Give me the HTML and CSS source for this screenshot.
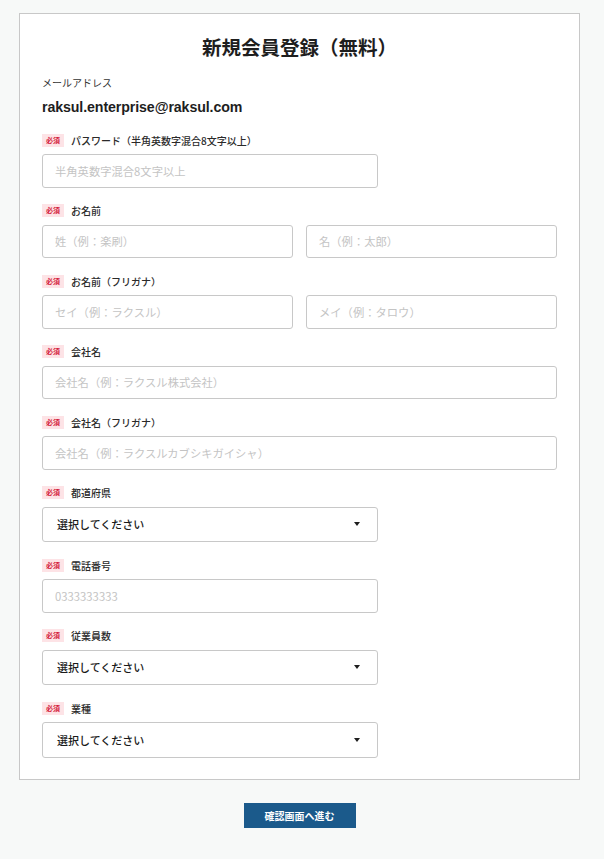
FILE: index.html
```html
<!DOCTYPE html>
<html lang="ja">
<head>
<meta charset="utf-8">
<title>新規会員登録（無料）</title>
<link rel="stylesheet" href="styles.css">
</head>
<body>
<main class="page">
  <form class="card">
    <h1 class="title">新規会員登録（無料）</h1>

    <div class="email-block">
      <div class="email-label">メールアドレス</div>
      <div class="email-value">raksul.enterprise@raksul.com</div>
    </div>

    <div class="field">
      <div class="label"><span class="badge">必須</span><span class="label-text">パスワード（半角英数字混合8文字以上）</span></div>
      <div class="control half"><span class="placeholder">半角英数字混合8文字以上</span></div>
    </div>

    <div class="field">
      <div class="label"><span class="badge">必須</span><span class="label-text">お名前</span></div>
      <div class="pair">
        <div class="control"><span class="placeholder">姓（例：楽刷）</span></div>
        <div class="control"><span class="placeholder">名（例：太郎）</span></div>
      </div>
    </div>

    <div class="field">
      <div class="label"><span class="badge">必須</span><span class="label-text">お名前（フリガナ）</span></div>
      <div class="pair">
        <div class="control"><span class="placeholder">セイ（例：ラクスル）</span></div>
        <div class="control"><span class="placeholder">メイ（例：タロウ）</span></div>
      </div>
    </div>

    <div class="field">
      <div class="label"><span class="badge">必須</span><span class="label-text">会社名</span></div>
      <div class="control"><span class="placeholder">会社名（例：ラクスル株式会社）</span></div>
    </div>

    <div class="field">
      <div class="label"><span class="badge">必須</span><span class="label-text">会社名（フリガナ）</span></div>
      <div class="control"><span class="placeholder">会社名（例：ラクスルカブシキガイシャ）</span></div>
    </div>

    <div class="field">
      <div class="label"><span class="badge">必須</span><span class="label-text">都道府県</span></div>
      <div class="control half select"><span class="select-text">選択してください</span><span class="caret"></span></div>
    </div>

    <div class="field">
      <div class="label"><span class="badge">必須</span><span class="label-text">電話番号</span></div>
      <div class="control half"><span class="placeholder">0333333333</span></div>
    </div>

    <div class="field">
      <div class="label"><span class="badge">必須</span><span class="label-text">従業員数</span></div>
      <div class="control half select"><span class="select-text">選択してください</span><span class="caret"></span></div>
    </div>

    <div class="field last">
      <div class="label"><span class="badge">必須</span><span class="label-text">業種</span></div>
      <div class="control half select"><span class="select-text">選択してください</span><span class="caret"></span></div>
    </div>
  </form>

  <div class="actions">
    <button type="button" class="submit">確認画面へ進む</button>
  </div>
</main>
</body>
</html>
```

FILE: styles.css
```css
* {
  box-sizing: border-box;
}

html,
body {
  margin: 0;
  padding: 0;
  background: #f7f9f8;
}

body {
  font-family: "Liberation Sans", "Noto Sans CJK JP", sans-serif;
  color: #222;
}

.page {
  padding: 13px 24px 0 19px;
}

.card {
  display: block;
  width: 561px;
  margin: 0;
  background: #fff;
  border: 1px solid #c8c8c8;
  padding: 21px 22px 21px;
}

.title {
  margin: 0;
  font-size: 19.5px;
  line-height: 24px;
  font-weight: 700;
  text-align: center;
  color: #1e1e1e;
  font-family: "Noto Sans CJK JP", sans-serif;
}

.email-block {
  margin-top: 17px;
  margin-bottom: 17px;
}

.email-label {
  font-family: "Noto Sans CJK JP", sans-serif;
  font-size: 10px;
  line-height: 14px;
  color: #333;
}

.email-value {
  margin-top: 8px;
  font-size: 14.2px;
  line-height: 18px;
  font-weight: 700;
  color: #1e1e1e;
  letter-spacing: -0.1px;
}

.field {
  margin-bottom: 16px;
}

.field.last {
  margin-bottom: 0;
}

.label {
  display: flex;
  align-items: center;
  gap: 7px;
  height: 14px;
  margin-bottom: 7px;
  font-family: "Noto Sans CJK JP", sans-serif;
}

.badge {
  display: inline-flex;
  align-items: center;
  justify-content: center;
  width: 22px;
  height: 13px;
  background: #fde3e6;
  color: #d4213b;
  font-size: 7px;
  font-weight: 700;
  line-height: 1;
}

.label-text {
  font-size: 10px;
  font-weight: 500;
  color: #2a2a2a;
}

.control {
  display: flex;
  align-items: center;
  height: 33.5px;
  border: 1px solid #c8c8c8;
  border-radius: 3px;
  background: #fff;
  padding: 0 12px;
  font-family: "Noto Sans CJK JP", sans-serif;
  font-size: 11.3px;
}

.control.half {
  width: 336px;
}

.pair {
  display: grid;
  grid-template-columns: 1fr 1fr;
  gap: 13px;
}

.placeholder {
  color: #c4c4c4;
}

.select {
  height: 35.5px;
  padding: 0 17px 0 14px;
  justify-content: space-between;
  font-size: 11px;
}

.select-text {
  color: #1a1a1a;
  font-weight: 500;
}

.caret {
  width: 0;
  height: 0;
  border-left: 3.5px solid transparent;
  border-right: 3.5px solid transparent;
  border-top: 4px solid #1e1e1e;
}

.actions {
  display: flex;
  justify-content: center;
  padding-top: 23px;
}

.submit {
  width: 112px;
  height: 25px;
  border: none;
  border-radius: 0;
  background: #1b5a8b;
  color: #fff;
  font-family: "Noto Sans CJK JP", sans-serif;
  font-size: 10px;
  font-weight: 700;
  padding: 0;
}
```
